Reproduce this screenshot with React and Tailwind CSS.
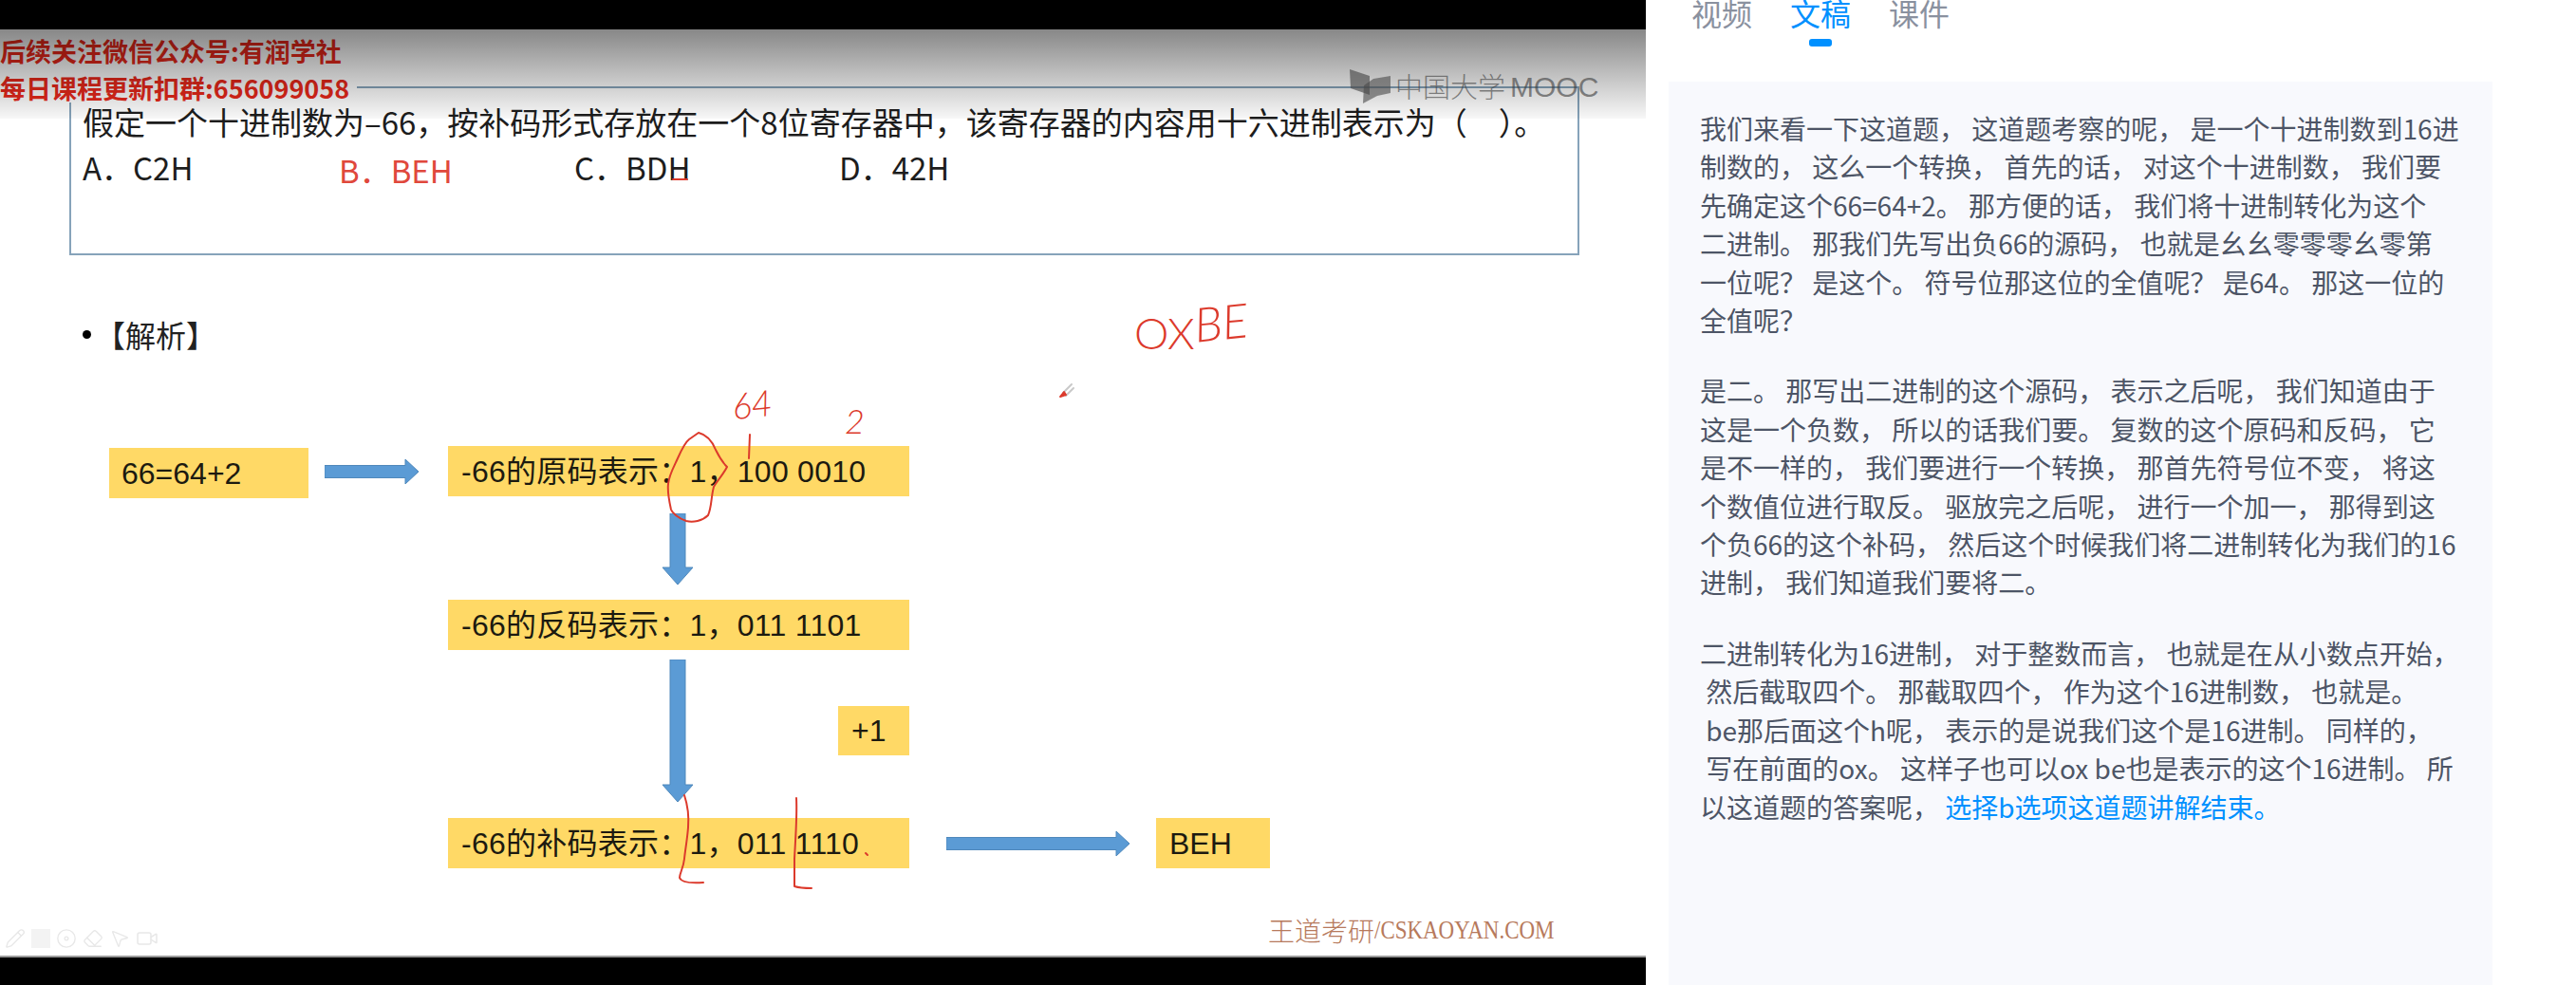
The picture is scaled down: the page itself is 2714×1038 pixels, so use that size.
import React from 'react';
import { Pencil, Disc, Eraser, MousePointer2, Video } from 'lucide-react';

const paragraphs = [
  [
    '我们来看一下这道题， 这道题考察的呢， 是一个十进制数到16进',
    '制数的， 这么一个转换， 首先的话， 对这个十进制数， 我们要',
    '先确定这个66=64+2。 那方便的话， 我们将十进制转化为这个',
    '二进制。 那我们先写出负66的源码， 也就是幺幺零零零幺零第',
    '一位呢？ 是这个。 符号位那这位的全值呢？ 是64。 那这一位的',
    '全值呢？',
  ],
  [
    '是二。 那写出二进制的这个源码， 表示之后呢， 我们知道由于',
    '这是一个负数， 所以的话我们要。 复数的这个原码和反码， 它',
    '是不一样的， 我们要进行一个转换， 那首先符号位不变， 将这',
    '个数值位进行取反。 驱放完之后呢， 进行一个加一， 那得到这',
    '个负66的这个补码， 然后这个时候我们将二进制转化为我们的16',
    '进制， 我们知道我们要将二。',
  ],
  [
    '二进制转化为16进制， 对于整数而言， 也就是在从小数点开始，',
    ' 然后截取四个。 那截取四个， 作为这个16进制数， 也就是。',
    ' be那后面这个h呢， 表示的是说我们这个是16进制。 同样的，',
    ' 写在前面的ox。 这样子也可以ox be也是表示的这个16进制。 所',
  ],
];

function ArrowRight({ width }) {
  const h = width - 14;
  return (
    <svg width={width} height="28" viewBox={`0 0 ${width} 28`} className="block shrink-0">
      <polygon
        points={`0,7.5 ${h},7.5 ${h},1 ${width},14 ${h},27 ${h},20.5 0,20.5`}
        fill="#5b9bd5"
        stroke="#4f88bb"
      />
    </svg>
  );
}

function ArrowDown({ height }) {
  const h = height - 18;
  return (
    <svg width="36" height={height} viewBox={`0 0 36 ${height}`} className="block shrink-0">
      <polygon
        points={`10,0 26,0 26,${h} 34,${h} 18,${height} 2,${h} 10,${h}`}
        fill="#5b9bd5"
        stroke="#4f88bb"
      />
    </svg>
  );
}

function CodeBox({ children }) {
  return (
    <div className="flex h-[53px] w-[486px] shrink-0 items-center whitespace-pre bg-[#ffd966] pl-[14px] text-[32px] tracking-[0.25px] text-[#1c1a10]">
      {children}
    </div>
  );
}

// red pen strokes the lecturer drew over the slide
function PenStrokes() {
  return (
    <svg
      className="pointer-events-none absolute left-0 top-0"
      width="1734"
      height="977"
      viewBox="0 31 1734 977"
      fill="none"
      stroke="#dc3a2c"
      strokeWidth="2"
      strokeLinecap="round"
      strokeLinejoin="round"
    >
      <path d="M736 456 C744 458 750 464 754 474 C758 482 762 488 766 492 C762 500 756 506 752 513 C749 524 750 534 746 543 C740 549 730 551 723 549 C714 546 708 540 707 537 C705 528 703 518 704 510 C705 500 710 492 714 483 C718 474 722 466 726 463 L736 456" />
      <path d="M790 458 L789 483" />
      <path d="M721 838 C725 850 726 860 725 872 C724 885 722 895 721 905 C720 915 716 920 716 925 C718 930 727 931 741 930" />
      <path d="M839 841 C840 860 838 885 837 905 L837 934 C843 936 849 936 855 936" />
      <path d="M912 899 L914 901" />
      <path d="M709 189 L724 189" />
      <path d="M1120 414 L1129 405 M1123 417 L1131 409" stroke="#c9c9c9" />
      <path d="M1117 418 L1121 413 L1123 416 Z" fill="#dc3a2c" />
    </svg>
  );
}

function Slide() {
  return (
    <div className="relative flex-1 overflow-hidden border-b-2 border-[#9a9a9a] bg-white font-['Liberation_Sans','Noto_Sans_CJK_SC',sans-serif]">
      {/* question */}
      <div className="ml-[73px] mt-[60px] h-[178px] w-[1591px] border-2 border-[#86a3ba] pl-[12px] pt-[11px] font-['Noto_Sans_CJK_SC',sans-serif] text-[33px] leading-[48px] text-[#1d1d1d]">
        <div className="whitespace-pre">假定一个十进制数为–66，按补码形式存放在一个8位寄存器中，该寄存器的内容用十六进制表示为（　）。</div>
        <div className="flex whitespace-pre">
          <span className="w-[270px]">A．C2H</span>
          <span className="mt-[3px] w-[248px] text-[#e0483c]">B．BEH</span>
          <span className="w-[279px]">C．BDH</span>
          <span>D．42H</span>
        </div>
      </div>

      {/* heading */}
      <div className="ml-[87px] mt-[63px] flex h-[40px] items-center gap-[4px] font-['Noto_Sans_CJK_SC',serif] text-[32px] text-[#222222]">
        <span className="h-[9px] w-[9px] rounded-full bg-black" />
        <span>【解析】</span>
      </div>

      {/* flow diagram */}
      <div className="ml-[115px] mt-[98px]">
        <div className="flex items-start">
          <div className="mt-[2px] flex h-[53px] w-[210px] items-center bg-[#ffd966] pl-[13px] text-[32px] text-[#1c1a10]">66=64+2</div>
          <div className="ml-[17px] mt-[13px]">
            <ArrowRight width={99} />
          </div>
          <div className="ml-[31px]">
            <CodeBox>-66的原码表示：1，100 0010</CodeBox>
          </div>
        </div>
        <div className="ml-[581px] mt-[16px]">
          <ArrowDown height={75} />
        </div>
        <div className="ml-[357px] mt-[16px]">
          <CodeBox>-66的反码表示：1，011 1101</CodeBox>
        </div>
        <div className="mt-[10px] flex items-start">
          <div className="ml-[581px]">
            <ArrowDown height={150} />
          </div>
          <div className="ml-[151px] mt-[49px] flex h-[52px] w-[75px] items-center bg-[#ffd966] pl-[14px] text-[32px] text-[#1c1a10]">+1</div>
        </div>
        <div className="ml-[357px] mt-[17px] flex items-center">
          <CodeBox>-66的补码表示：1，011 1110</CodeBox>
          <div className="ml-[39px]">
            <ArrowRight width={193} />
          </div>
          <div className="ml-[28px] flex h-[53px] w-[120px] items-center bg-[#ffd966] pl-[14px] text-[32px] text-[#1c1a10]">BEH</div>
        </div>
      </div>

      {/* slide footer */}
      <div className="mt-[62px] flex items-center pl-[5px]">
        <div className="flex w-[1331px] items-center gap-[6px] text-[#e8e8e8]">
          <Pencil size={22} strokeWidth={1.5} />
          <span className="h-[20px] w-[20px] bg-[#f3f3f3]" />
          <Disc size={22} strokeWidth={1.5} />
          <Eraser size={22} strokeWidth={1.5} />
          <MousePointer2 size={22} strokeWidth={1.5} />
          <Video size={24} strokeWidth={1.5} />
        </div>
        <div className="-mt-[18px] flex items-center whitespace-pre text-[28px] leading-[32px] text-[#b77a5c]">
          <span className="font-['Noto_Sans_CJK_SC',serif] font-light">王道考研</span>
          <span className="inline-block origin-left scale-x-[0.82] font-['Liberation_Serif',serif]">/CSKAOYAN.COM</span>
        </div>
      </div>

      <PenStrokes />

      {/* handwritten labels */}
      <span className="absolute left-[771px] top-[372px] -rotate-6 font-['Lato',sans-serif] text-[38px] font-light italic leading-[44px] text-[#dc3a2c]">64</span>
      <span className="absolute left-[890px] top-[394px] font-['Lato',sans-serif] text-[36px] font-light italic leading-[36px] text-[#dc3a2c]">2</span>
      <span className="absolute left-[1195px] top-[294px] font-['Lato',sans-serif] text-[46px] font-light leading-[52px] text-[#dc3a2c]">OX</span>
      <span className="absolute left-[1258px] top-[282px] -rotate-6 font-['Lato',sans-serif] text-[50px] font-light italic leading-[52px] text-[#dc3a2c]">BE</span>

      {/* channel watermark */}
      <div className="absolute left-0 top-0 h-[77px] w-[376px] bg-white font-['Noto_Sans_CJK_SC',sans-serif] text-[27px] font-bold leading-[39px] text-[#e8281a]">
        <div className="whitespace-pre pt-[3px]">后续关注微信公众号:有润学社</div>
        <div className="whitespace-pre">每日课程更新扣群:656099058</div>
      </div>

      {/* player shade */}
      <div className="pointer-events-none absolute left-0 top-0 h-[94px] w-full bg-linear-to-b from-black/47 to-black/3" />

      {/* platform logo */}
      <div className="absolute left-[1421px] top-[42px] flex h-[36px] items-center gap-[5px] whitespace-pre text-[#3c3c3c]/60">
        <svg width="44" height="36" viewBox="0 0 44 36" className="block">
          <polygon points="1,0 22,7 22,27 2,20" fill="#4a4a4a" fillOpacity="0.65" />
          <polygon points="44,7 26,10 16,17 15,36 30,28 44,25" fill="#4a4a4a" fillOpacity="0.6" />
        </svg>
        <span className="font-['Noto_Sans_CJK_SC',sans-serif] text-[29px] font-light">中国大学</span>
        <span className="text-[30px]">MOOC</span>
      </div>
    </div>
  );
}

function Transcript() {
  return (
    <div className="ml-[24px] flex-1 w-[868px] bg-[#f8f9fd] pl-[33px] pt-[29px] text-[28px] leading-[40.4px] text-[#4d5566]">
      <div className="flex flex-col gap-[34px]">
        {paragraphs.slice(0, 2).map((lines, i) => (
          <div key={i}>
            {lines.map((line, j) => (
              <div key={j} className="whitespace-pre">{line}</div>
            ))}
          </div>
        ))}
        <div>
          {paragraphs[2].map((line, j) => (
            <div key={j} className="whitespace-pre">{line}</div>
          ))}
          <div className="whitespace-pre">
            以这道题的答案呢， <span className="text-[#0090ff]">选择b选项这道题讲解结束。</span>
          </div>
        </div>
      </div>
    </div>
  );
}

export default function App() {
  return (
    <div className="flex h-[1038px] w-[2714px] overflow-hidden bg-white font-['Noto_Sans_CJK_SC',sans-serif]">
      <div className="flex w-[1734px] shrink-0 flex-col bg-black">
        <div className="h-[31px]" />
        <Slide />
        <div className="h-[29px]" />
      </div>
      <div className="flex flex-1 flex-col">
        <div className="flex h-[86px] gap-[40px] pl-[48px]">
          <div className="-mt-[3px] h-[32px] text-[32px] leading-[32px] text-[#8a919f]">视频</div>
          <div className="-mt-[3px] flex flex-col items-center">
            <span className="text-[32px] leading-[32px] text-[#0090ff]">文稿</span>
            <span className="mt-[12px] h-[8px] w-[24px] rounded-[3px] bg-[#0090ff]" />
          </div>
          <div className="-mt-[3px] h-[32px] text-[32px] leading-[32px] text-[#8a919f]">课件</div>
        </div>
        <Transcript />
      </div>
    </div>
  );
}
